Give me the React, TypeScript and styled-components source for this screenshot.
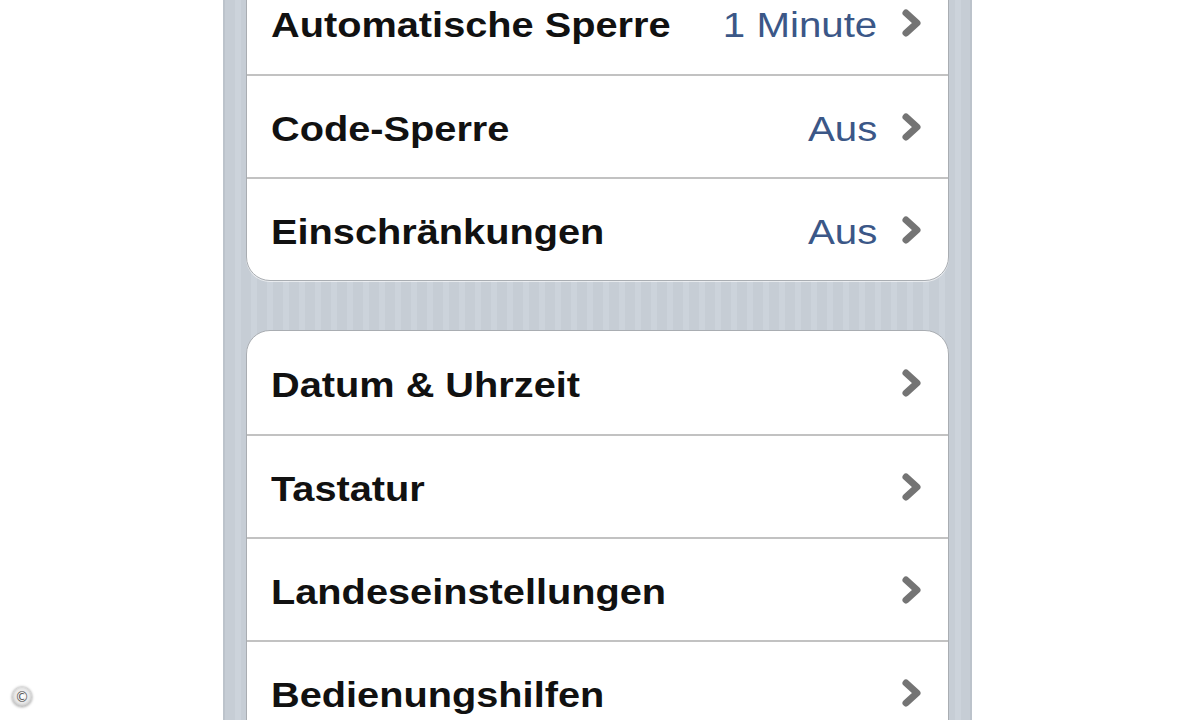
import React from "react";
import styled, { createGlobalStyle } from "styled-components";

const Global = createGlobalStyle`
  html, body { margin: 0; padding: 0; background: #ffffff; overflow: hidden; }
  body { font-family: "Liberation Sans", Arial, Helvetica, sans-serif; }
`;

const Page = styled.div`
  width: 1200px;
  height: 720px;
  overflow: hidden;
  position: relative;
  background: #ffffff;
  padding-left: 223px;
  box-sizing: border-box;
`;

const Phone = styled.div`
  width: 749px;
  height: 800px;
  box-sizing: border-box;
  padding: 0 21px;
  margin-top: -30px;
  display: flex;
  flex-direction: column;
  gap: 49px;
  background: repeating-linear-gradient(
    90deg,
    #c6cdd5 0px,
    #c6cdd5 10px,
    #ccd3db 10px,
    #ccd3db 16px
  );
  border-left: 2px solid #bcc3cb;
  border-right: 2px solid #bcc3cb;
`;

const Card = styled.div`
  background: #ffffff;
  border: 1px solid #a9adb2;
  border-radius: 24px;
  overflow: hidden;
  display: flex;
  flex-direction: column;
  box-shadow: 0 1px 0 rgba(255, 255, 255, 0.6);
`;

const Row = styled.div`
  height: 103px;
  display: flex;
  align-items: center;
  box-sizing: border-box;
  padding: 4px 25px 0 24px;
  border-top: 2px solid #c2c2c2;
  &:first-child { border-top: none; }
`;

const Label = styled.span`
  font-family: "Liberation Sans", Arial, sans-serif;
  font-weight: 700;
  font-size: 35px;
  color: #111111;
  transform: scaleX(1.135);
  transform-origin: left center;
  white-space: nowrap;
  flex: 1;
`;

const Value = styled.span`
  font-family: "Liberation Sans", Arial, sans-serif;
  font-weight: 400;
  font-size: 35px;
  color: #3b5787;
  transform: scaleX(1.15);
  transform-origin: right center;
  white-space: nowrap;
  margin-right: 24px;
`;

const Chevron = styled.svg`
  width: 22px;
  height: 30px;
  flex: none;
  margin-top: -4px;
`;

const Copyright = styled.div`
  position: absolute;
  left: 12px;
  bottom: 13px;
  width: 20px;
  height: 20px;
  border-radius: 50%;
  background: radial-gradient(circle at 50% 45%, #ffffff 0%, #e6e6e6 50%, #8f8f8f 100%);
  color: #5a5a5a;
  font-family: "DejaVu Sans", sans-serif;
  font-size: 14px;
  line-height: 20px;
  text-align: center;
  box-shadow: 0 0 3px rgba(0, 0, 0, 0.45);
`;

const Arrow = () => (
  <Chevron viewBox="0 0 22 30">
    <polyline
      points="5,5 16,15 5,25"
      fill="none"
      stroke="#747474"
      strokeWidth="7"
      strokeLinejoin="round"
      strokeLinecap="round"
    />
  </Chevron>
);

type Item = { label: string; value?: string };

const group1: Item[] = [
  { label: "Automatische Sperre", value: "1 Minute" },
  { label: "Code-Sperre", value: "Aus" },
  { label: "Einschränkungen", value: "Aus" },
];

const group2: Item[] = [
  { label: "Datum & Uhrzeit" },
  { label: "Tastatur" },
  { label: "Landeseinstellungen" },
  { label: "Bedienungshilfen" },
];

const Group = ({ items }: { items: Item[] }) => (
  <Card>
    {items.map((it) => (
      <Row key={it.label}>
        <Label>{it.label}</Label>
        {it.value && <Value>{it.value}</Value>}
        <Arrow />
      </Row>
    ))}
  </Card>
);

export default function App() {
  return (
    <Page>
      <Global />
      <Phone>
        <Group items={group1} />
        <Group items={group2} />
      </Phone>
      <Copyright>©</Copyright>
    </Page>
  );
}
